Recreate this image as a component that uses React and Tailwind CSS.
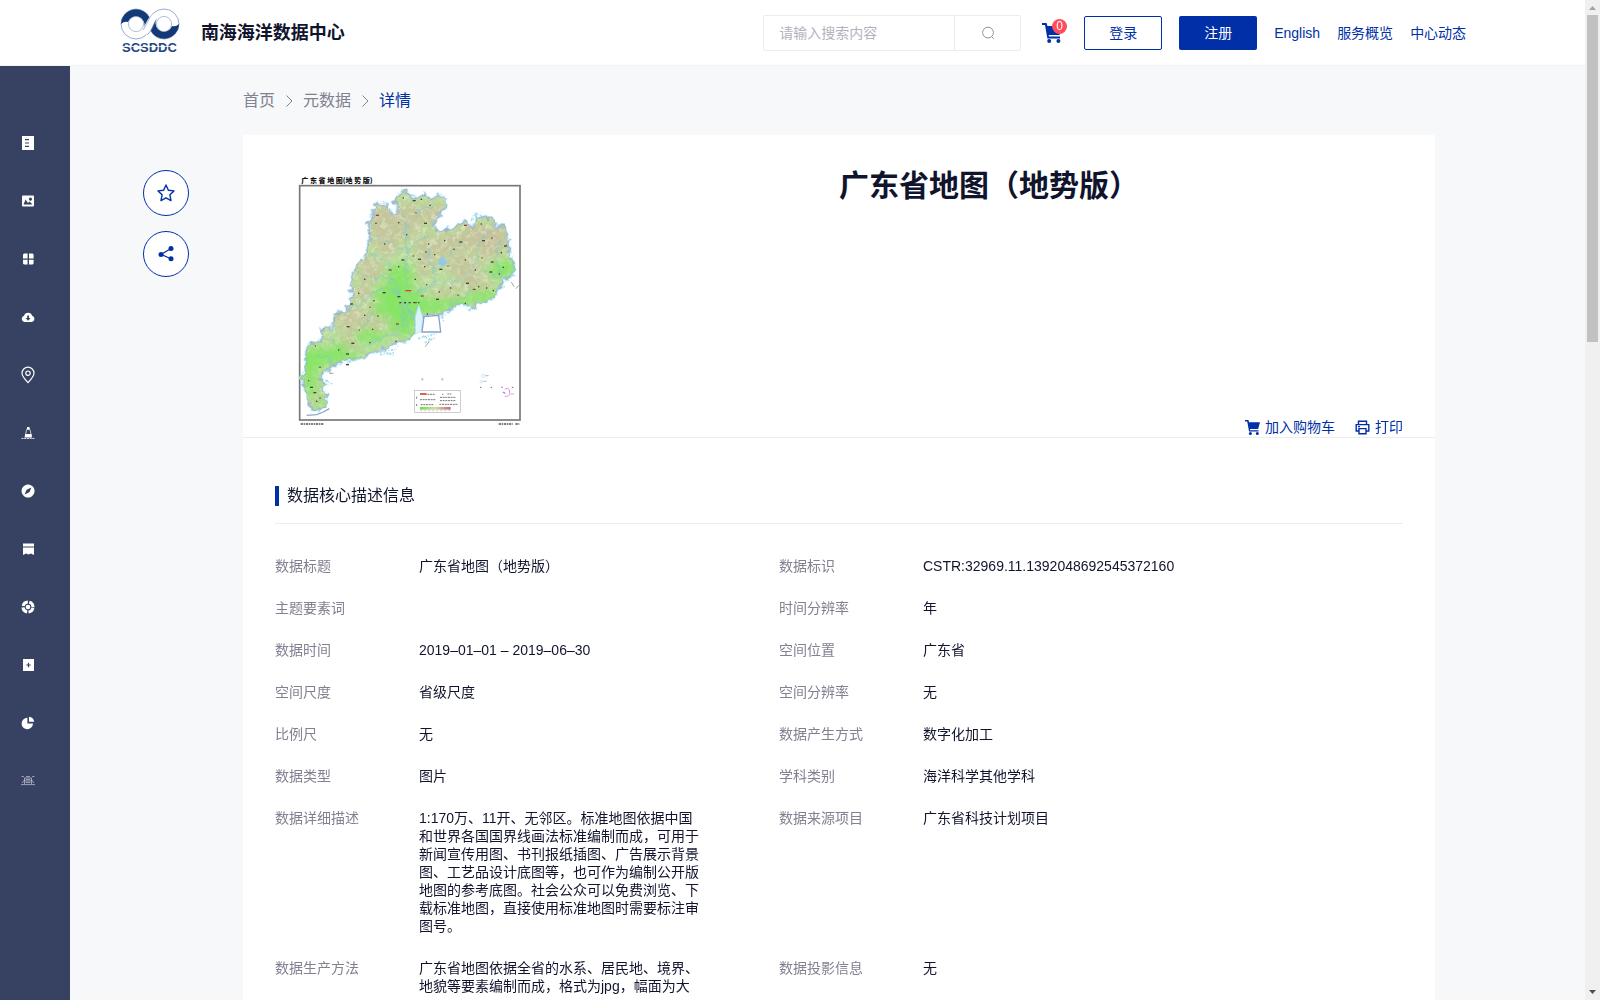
import { useState } from "react";

const province =
  "M48 540 L66 514 L96 516 L98 478 L130 474 L134 432 L160 428 L182 404 L190 300 L212 272 L226 268 L232 222 L244 208 L234 172 L246 150 L256 102 L290 106 L302 134 L320 136 L324 108 L312 94 L330 72 L346 62 L364 84 L384 86 L404 72 L422 88 L450 76 L468 92 L464 118 L438 140 L430 168 L446 188 L482 176 L524 154 L550 180 L556 138 L582 142 L604 146 L616 170 L640 164 L652 200 L656 250 L674 294 L664 314 L640 334 L622 366 L600 388 L562 398 L548 416 L520 400 L494 404 L460 430 L398 438 L386 410 L376 440 L376 486 L350 510 L318 516 L290 532 L246 546 L214 562 L174 570 L130 584 L118 598 L94 612 L86 630 L110 640 L92 652 L108 676 L106 706 L84 720 L64 716 L58 690 L42 660 L38 620 L50 590 Z";

const rivers = [
  "M192 300 Q240 330 280 322 T330 376 L372 440",
  "M134 434 Q190 420 236 378 T330 376",
  "M256 196 Q300 216 350 246 Q380 200 420 200",
  "M326 108 Q350 140 348 178 T352 246 L346 318 L362 380",
  "M380 140 L384 118 L430 112",
  "M512 210 Q490 250 454 270 T440 330 L372 374",
  "M606 180 Q560 210 566 240 T510 332 L440 342 L372 374",
  "M636 200 Q610 260 630 300 L640 328",
  "M574 300 L600 310 L640 328",
  "M98 500 Q150 520 160 560",
  "M220 540 Q260 500 320 490 L346 440",
  "M78 560 Q120 550 130 584",
  "M300 290 L302 340 L330 376",
  "M480 404 Q530 380 550 350",
  "M330 376 L340 470 M340 400 L362 500 M350 390 L376 470",
  "M240 250 Q280 270 300 290 M420 230 Q400 280 440 300 M210 480 Q240 450 250 410",
];

const hills = [
  [270, 150, 40, 50], [350, 150, 50, 55], [430, 130, 40, 34], [290, 220, 40, 40],
  [420, 240, 46, 44], [480, 220, 40, 36], [560, 200, 60, 44], [600, 230, 40, 50],
  [520, 290, 50, 40], [560, 340, 50, 26], [240, 300, 40, 36], [180, 450, 44, 40],
  [180, 520, 26, 24], [250, 450, 36, 34], [470, 370, 50, 18], [220, 370, 30, 30],
  [86, 686, 14, 16], [320, 470, 12, 30], [400, 300, 30, 22], [630, 200, 24, 34],
];

const plains = [
  [330, 320, 44, 40], [350, 400, 60, 50], [290, 370, 40, 26], [340, 460, 40, 40],
  [600, 380, 70, 18], [640, 300, 40, 30], [500, 396, 50, 14], [80, 560, 50, 30],
  [160, 566, 70, 14], [60, 620, 22, 60], [240, 500, 50, 20], [280, 420, 34, 22],
  [430, 410, 40, 24], [96, 700, 14, 20], [150, 540, 30, 20],
];

const towns = [
  [260, 136], [258, 160], [340, 84], [370, 92], [326, 158], [378, 128], [404, 160], [350, 194],
  [284, 222], [336, 270], [370, 258], [408, 246], [386, 268], [404, 290], [326, 290], [298, 300],
  [224, 328], [206, 370], [280, 368], [252, 392], [240, 412], [182, 402], [264, 438], [224, 436],
  [172, 470], [208, 480], [248, 478], [186, 520], [240, 518], [318, 514], [320, 462], [346, 398],
  [378, 398], [324, 380], [376, 328], [410, 344], [440, 388], [482, 354], [448, 366], [450, 298],
  [474, 288], [434, 254], [510, 216], [464, 212], [492, 238], [524, 166], [574, 162], [606, 204],
  [578, 212], [526, 270], [576, 264], [604, 276], [634, 248], [556, 300], [530, 340], [504, 376],
  [566, 350], [600, 306], [628, 312], [640, 292], [550, 358], [526, 400], [412, 432], [170, 552],
  [90, 592], [56, 632], [62, 652], [90, 684], [80, 694], [170, 584], [76, 528], [146, 540],
  [72, 668], [610, 362], [590, 354], [394, 378], [420, 106], [394, 88], [644, 228], [416, 222],
];

function ProvinceMap() {
  return (
    <svg viewBox="0 0 720 780" className="mt-0.5 mb-[7px] h-[260px] w-[240px] shrink-0" role="img" aria-label="广东省地图（地势版）">
      <defs>
        <clipPath id="province">
          <path d={province} />
        </clipPath>
        <filter id="soft" x="-30%" y="-30%" width="160%" height="160%">
          <feGaussianBlur stdDeviation="12" />
        </filter>
        <filter id="coast" x="-5%" y="-5%" width="110%" height="110%">
          <feTurbulence type="fractalNoise" baseFrequency="0.06" numOctaves="2" seed="9" result="noise" />
          <feDisplacementMap in="SourceGraphic" in2="noise" scale="26" xChannelSelector="R" yChannelSelector="G" />
        </filter>
        <filter id="relief" x="0" y="0" width="100%" height="100%">
          <feTurbulence type="fractalNoise" baseFrequency="0.1" numOctaves="3" seed="4" />
          <feColorMatrix values="0 0 0 0 0.66  0 0 0 0 0.5  0 0 0 0 0.4  3 2 0 0 -2.4" />
        </filter>
        <filter id="ridges" x="0" y="0" width="100%" height="100%">
          <feTurbulence type="fractalNoise" baseFrequency="0.08" numOctaves="3" seed="21" />
          <feColorMatrix values="0 0 0 0 0.86  0 0 0 0 0.93  0 0 0 0 0.78  3 2 0 0 -2.4" />
        </filter>
        <linearGradient id="height">
          <stop offset="0" stopColor="#6fe04a" />
          <stop offset="0.5" stopColor="#d8d8a8" />
          <stop offset="1" stopColor="#c56a86" />
        </linearGradient>
      </defs>
      <text x="34" y="38" fontSize="21" fontWeight="900" fill="#111" fontFamily="'Noto Sans CJK SC', sans-serif">
        广 东 省 地 图(地 势 版)
      </text>
      <rect x="29" y="47" width="661" height="703" fill="#fff" stroke="#777" strokeWidth="5" />
      <g filter="url(#coast)">
        <path d={province} fill="none" stroke="#c4ecfa" strokeWidth="12" strokeLinejoin="round" />
        <path d={province} fill="#b6dd98" stroke="#93abd3" strokeWidth="4" strokeLinejoin="round" />
        <g clipPath="url(#province)">
          <g filter="url(#soft)">
            {hills.map(([x, y, rx, ry], i) => (
              <ellipse key={i} cx={x} cy={y} rx={rx} ry={ry} fill="#c9b998" opacity="0.6" />
            ))}
          </g>
          <rect x="30" y="50" width="660" height="690" filter="url(#relief)" opacity="0.35" />
          <rect x="30" y="50" width="660" height="690" filter="url(#ridges)" opacity="0.5" />
          <g filter="url(#soft)">
            {plains.map(([x, y, rx, ry], i) => (
              <ellipse key={i} cx={x} cy={y} rx={rx} ry={ry} fill="#7fe65c" opacity="0.8" />
            ))}
          </g>
          <g fill="none" stroke="#7fc6cb" strokeWidth="2.5">
            {rivers.map((d) => (
              <path key={d} d={d} />
            ))}
          </g>
          <path d="M440 280 L456 262 L470 276 L458 290 Z" fill="#8fc8ee" />
        </g>
      </g>
      {towns.map(([x, y], i) => (
        <rect key={i} x={x - 2} y={y - 2} width={i % 3 ? 4 : 9} height="4" fill={i % 5 ? "#3b4a36" : "#9c4439"} />
      ))}
      <path d="M346 362 h18" stroke="#e0401c" strokeWidth="4" />
      <path d="M328 398 h60" stroke="#3b4a36" strokeWidth="4" strokeDasharray="6 8" />
      {/* pearl river mouth and the islands around it */}
      <path d="M376 440 L386 404 L398 440 L394 484 L376 492 Z" fill="#dcf5fd" stroke="#a9dcef" strokeWidth="2" />
      <path d="M402 440 L446 436 L452 486 L396 486 Z" fill="#fff" stroke="#8ba0cc" strokeWidth="4" />
      <g fill="none" stroke="#9fdde8" strokeWidth="5" strokeDasharray="7 4 3 5">
        <path d="M246 548 L320 538 M270 554 L312 548 M280 544 L310 556 M384 506 L440 490 M404 518 L434 504 M398 498 L424 510 M456 440 L462 456 M470 428 L490 420 M110 600 L126 610 M106 630 L126 642 M650 312 L680 318 M536 418 L546 424 M176 576 L210 566" />
      </g>
      <path d="M406 530 L418 514 M664 336 L672 350 M678 356 L686 346 M118 610 L130 610" stroke="#68777a" strokeWidth="2" />
      <path d="M50 736 L80 734 L100 726 L118 716" fill="none" stroke="#8fa6c2" strokeWidth="4" />
      <path d="M394 628 h6 M454 628 h6" stroke="#9ccaf5" strokeWidth="7" />
      <path d="M570 652 H674" stroke="#888" strokeWidth="4" strokeDasharray="4 28" />
      <circle cx="580" cy="618" r="5" fill="none" stroke="#b2d8f3" strokeWidth="2" />
      <circle cx="574" cy="635" r="4" fill="none" stroke="#b2d8f3" strokeWidth="2" />
      <path d="M586 617 h10 M580 634 h10 M662 672 h10" stroke="#999" strokeWidth="2" />
      <path d="M644 658 Q652 650 658 660 Q662 672 656 677 Q650 682 644 678" fill="none" stroke="#f08ae4" strokeWidth="3" />
      <path d="M638 666 l8 4" stroke="#71a8d8" strokeWidth="4" />
      {/* legend */}
      <rect x="374" y="661" width="137" height="66" fill="#fff" stroke="#b5b5b5" strokeWidth="2" />
      <path d="M390 672 h20" stroke="#d4452a" strokeWidth="5" />
      <path d="M412 673 h24 M390 689 h46 M392 704 h40 M450 682 h46 M450 692 h46 M448 703 h54 M456 673 h4 M472 672 h12 M380 680 v6 M380 702 v6" stroke="#777" strokeWidth="3" strokeDasharray="6 2" />
      <rect x="390" y="711" width="92" height="8" fill="url(#height)" />
      <path d="M392 722 h90" stroke="#777" strokeWidth="2" strokeDasharray="3 9" />
      <path d="M32 762 h70 M626 762 h42 M676 762 h12" stroke="#555" strokeWidth="5" strokeDasharray="7 2 4 2" />
    </svg>
  );
}

function Logo() {
  return (
    <svg viewBox="0 0 62 46" className="mb-1 h-[46px] w-[62px]" aria-hidden="true">
      <g fill="#fff" stroke="#7f96bd" strokeWidth="0.8">
        <circle cx="17" cy="16" r="15" />
        <circle cx="45" cy="16" r="15" />
      </g>
      <path d="M2 16 A15 15 0 0 1 31 11 C28 14 27 18 25 20 A8 8 0 0 0 9 14 Q5 13 2 16 Z" fill="#123a78" />
      <path d="M60 16 A15 15 0 0 1 31 21 C34 18 35 14 37 12 A8 8 0 0 0 53 18 Q57 19 60 16 Z" fill="#123a78" />
      <path d="M25 19 C28 13 30 8 36 4 L38 9 C34 15 34 22 27 27 L23 22 Z" fill="#fff" />
      <path d="M24 22 C29 15 30 8 36 4 M28 27 C34 22 34 15 38 11" fill="none" stroke="#7f96bd" strokeWidth="0.7" />
      <circle cx="17" cy="16" r="7.6" fill="#fff" stroke="#7f96bd" strokeWidth="0.6" />
      <circle cx="45" cy="16" r="7.6" fill="#fff" stroke="#7f96bd" strokeWidth="0.6" />
      <text x="3" y="44" fontSize="13" fontWeight="700" fill="#1f4680" fontFamily="'Liberation Sans', sans-serif">
        SCSDDC
      </text>
      <path d="M3 38.5 h56" stroke="#fff" strokeWidth="0.8" />
    </svg>
  );
}

function CartIcon({ className }) {
  return (
    <svg viewBox="0 0 20 20" className={className} fill="currentColor" aria-hidden="true">
      <path d="M0 0 H4.6 L5.4 3 H20 L17.5 12 H6.6 L7 13.6 H18 V15.4 H5.4 L3 2 H0 Z" />
      <circle cx="7.2" cy="18" r="2" />
      <circle cx="16.4" cy="18" r="2" />
    </svg>
  );
}

const menu = [
  { name: "数据目录", icon: <path fillRule="evenodd" d="M1 0 H13 V14 H1 Z M4 3 V4.2 H8 V3 Z M4 6.4 V7.6 H8 V6.4 Z M4 9.8 V11 H8 V9.8 Z" /> },
  { name: "图集", icon: <path fillRule="evenodd" d="M2 1.5 H12 Q13 1.5 13 2.5 V11.5 Q13 12.5 12 12.5 H2 Q1 12.5 1 11.5 V2.5 Q1 1.5 2 1.5 Z M2.5 10.5 H11.5 L8.6 7.6 L7 9 L4.6 5.6 Z M9.4 3.6 A1.6 1.6 0 1 0 9.5 3.6 Z" /> },
  { name: "专题", icon: <path d="M3 1.6 H6.6 V6.4 H2 V2.6 Z M8 1.6 H11.6 L12.6 2.6 V6.4 H8 Z M2 7.8 H6.6 V12.6 H3 L2 11.6 Z M8 7.8 H12.6 V11.6 L11.6 12.6 H8 Z" /> },
  { name: "下载", icon: <path fillRule="evenodd" d="M3.4 12 A3.2 3.2 0 0 1 3 5.8 A4.3 4.3 0 0 1 11.2 5.8 A3.2 3.2 0 0 1 10.8 12 Z M6.2 5.4 V8 H4.6 L7.1 10.8 L9.6 8 H8 V5.4 Z" /> },
  {
    name: "站位",
    icon: (
      <g fill="none" stroke="currentColor" strokeWidth="1.2">
        <path d="M7 14.6 C3 10.4 1 8 1 5.2 A6 6 0 0 1 13 5.2 C13 8 11 10.4 7 14.6 Z" />
        <circle cx="7" cy="5.2" r="2.2" />
      </g>
    ),
  },
  {
    name: "浮标",
    icon: (
      <g>
        <path d="M6.2 1 H8.4 L9 3.8 H5.6 Z M4.2 8 H10.4 L11 11.4 H3.6 Z" />
        <path d="M5.6 3.6 L4.2 10 M9 3.6 L10.4 10" stroke="currentColor" strokeWidth="0.7" />
        <path d="M0.5 12.4 H13.5" stroke="currentColor" strokeWidth="0.9" strokeDasharray="2 0.7" />
      </g>
    ),
  },
  { name: "导航", icon: <path fillRule="evenodd" d="M7 0.5 A6.5 6.5 0 1 0 7.1 0.5 Z M10.4 3.6 L8.4 8.2 L3.6 10.4 L5.6 5.8 Z" /> },
  { name: "期刊", icon: <path d="M2 1.4 H13 V4.6 H2 Z M2 5.6 H13 V13 L10 11.4 L7.5 12.4 L5 11.4 L2 13 Z" /> },
  {
    name: "服务",
    icon: (
      <g>
        <circle cx="7" cy="7" r="5" fill="none" stroke="currentColor" strokeWidth="3" strokeDasharray="6.4 1.454" strokeDashoffset="-0.7" />
        <circle cx="7" cy="7" r="2.3" />
      </g>
    ),
  },
  { name: "提交", icon: <path fillRule="evenodd" d="M2 1 H13 V13 H2 Z M6.9 4.8 V6.4 H5.3 V7.6 H6.9 V9.2 H8.1 V7.6 H9.7 V6.4 H8.1 V4.8 Z" /> },
  { name: "统计", icon: <path d="M6.4 1.8 V7.6 H12 A5.7 5.7 0 1 1 6.4 1.8 Z M8 0.8 A6 6 0 0 1 13.2 5.8 H8 Z" /> },
  {
    name: "平台",
    icon: (
      <g fill="none" stroke="currentColor" strokeWidth="0.8" opacity="0.65">
        <path d="M0.5 2.6 H3 M5 2.6 H9 M11 2.6 H13.5 M3.5 10 V4 H10.5 V10 M0 10.6 H14 M1 9 L3.5 6 M10.5 6 L13 9 M5 5.6 H9 V8.6 H5 Z M6 7 H8" />
      </g>
    ),
  },
];

const details = [
  ["数据标题", "广东省地图（地势版）", "数据标识", "CSTR:32969.11.1392048692545372160"],
  ["主题要素词", "", "时间分辨率", "年"],
  ["数据时间", "2019–01–01 – 2019–06–30", "空间位置", "广东省"],
  ["空间尺度", "省级尺度", "空间分辨率", "无"],
  ["比例尺", "无", "数据产生方式", "数字化加工"],
  ["数据类型", "图片", "学科类别", "海洋科学其他学科"],
  [
    "数据详细描述",
    "1:170万、11开、无邻区。标准地图依据中国和世界各国国界线画法标准编制而成，可用于新闻宣传用图、书刊报纸插图、广告展示背景图、工艺品设计底图等，也可作为编制公开版地图的参考底图。社会公众可以免费浏览、下载标准地图，直接使用标准地图时需要标注审图号。",
    "数据来源项目",
    "广东省科技计划项目",
  ],
  ["数据生产方法", "广东省地图依据全省的水系、居民地、境界、地貌等要素编制而成，格式为jpg，幅面为大", "数据投影信息", "无"],
];

function Header() {
  const [keyword, setKeyword] = useState("");

  return (
    <header className="h-[66px] shrink-0 border-b border-[#f1f2f4] bg-white">
      <div className="mx-auto flex h-full w-[85%] items-center">
        <a href="#" className="flex items-center gap-5">
          <Logo />
          <span className="text-lg font-bold">南海海洋数据中心</span>
        </a>
        <div className="ml-auto flex items-center gap-[17px] text-[#002fa7]">
          <form className="mr-1 flex h-9 w-[258px] rounded-xs border border-[#ececee]" onSubmit={(e) => e.preventDefault()}>
            <input
              type="text"
              aria-label="搜索"
              placeholder="请输入搜索内容"
              value={keyword}
              onChange={(e) => setKeyword(e.target.value)}
              className="min-w-0 flex-1 px-[15px] text-[#11142d] outline-none placeholder:text-[#b2b3bd]"
            />
            <button type="submit" aria-label="搜索" className="flex w-[66px] items-center justify-center border-l border-[#ececee] text-[#909399]">
              <svg viewBox="0 0 14 14" className="size-3.5" fill="none" stroke="currentColor" aria-hidden="true">
                <circle cx="7" cy="6.6" r="5.4" />
                <path d="M10.6 10.6 L12.8 12.8" />
              </svg>
            </button>
          </form>
          <a href="#" aria-label="购物车" className="relative mr-[5px]">
            <CartIcon className="size-5" />
            <span className="absolute -top-1 left-2.5 size-[15px] rounded-full bg-[#ff4d5b] text-center text-xs leading-[15px] text-white">0</span>
          </a>
          <button className="h-[34px] w-[78px] rounded-xs border border-[#002fa7]">登录</button>
          <button className="h-[34px] w-[78px] rounded-xs bg-[#002fa7] text-white">注册</button>
          <a href="#">English</a>
          <a href="#">服务概览</a>
          <a href="#">中心动态</a>
        </div>
      </div>
    </header>
  );
}

function Sidebar() {
  return (
    <nav className="w-[70px] shrink-0 bg-[#374263] pt-[70px] pl-[21px] text-white">
      <ul className="flex flex-col gap-11">
        {menu.map((item) => (
          <li key={item.name}>
            <a href="#" aria-label={item.name} className="block w-3.5">
              <svg viewBox="0 0 14 14" className="size-3.5 overflow-visible" fill="currentColor" aria-hidden="true">
                {item.icon}
              </svg>
            </a>
          </li>
        ))}
      </ul>
    </nav>
  );
}

function Chevron() {
  return (
    <svg viewBox="0 0 28 14" className="h-3.5 w-7" fill="none" stroke="currentColor" aria-hidden="true">
      <path d="M11.5 1.5 L17 7 L11.5 12.5" />
    </svg>
  );
}

function Scrollbar() {
  return (
    <div className="flex w-[15px] shrink-0 flex-col items-center bg-[#f0f0f0]" aria-hidden="true">
      <svg viewBox="0 0 15 15" className="size-[15px]">
        <path d="M4 10 L7.5 6 L11 10 Z" fill="#a3a3a3" />
      </svg>
      <div className="h-[327px] w-[11px] bg-[#c1c1c1]" />
      <svg viewBox="0 0 15 15" className="mt-auto size-[15px]">
        <path d="M4 5 L7.5 9 L11 5 Z" fill="#505050" />
      </svg>
    </div>
  );
}

export default function App() {
  const [starred, setStarred] = useState(false);

  return (
    <div className="flex h-screen overflow-hidden bg-[#f7f8fa] font-['Liberation_Sans','Noto_Sans_CJK_SC',sans-serif] text-sm text-[#11142d]">
      <div className="flex min-w-0 flex-1 flex-col">
        <Header />
        <div className="flex min-h-0 flex-1">
          <Sidebar />
          <div className="mt-[104px] mr-[54px] ml-[73px] flex flex-col gap-[15px] text-[#002fa7]">
            <button
              aria-label="收藏"
              onClick={() => setStarred(!starred)}
              className="flex size-[46px] items-center justify-center rounded-full border border-current bg-white"
            >
              <svg viewBox="0 0 18 18" className="size-[18px]" fill={starred ? "currentColor" : "none"} stroke="currentColor" strokeWidth="1.4" strokeLinejoin="round" aria-hidden="true">
                <path d="M9 1 L11.4 6.2 L17 6.9 L12.9 10.8 L14 16.6 L9 13.8 L4 16.6 L5.1 10.8 L1 6.9 L6.6 6.2 Z" />
              </svg>
            </button>
            <button aria-label="分享" className="flex size-[46px] items-center justify-center rounded-full border border-current bg-white">
              <svg viewBox="0 0 16 16" className="size-4" fill="currentColor" aria-hidden="true">
                <circle cx="3" cy="8.4" r="2.5" />
                <circle cx="13" cy="2.6" r="2.5" />
                <circle cx="13" cy="12.8" r="2.5" />
                <path d="M13 2.6 L3 8.4 L13 12.8" fill="none" stroke="currentColor" strokeWidth="1.2" />
              </svg>
            </button>
          </div>

          <main className="mr-[150px] flex min-w-0 flex-1 flex-col">
            <nav className="flex items-center pt-[23px] pb-[22px] text-base text-[#808191]">
              <a href="#">首页</a>
              <Chevron />
              <a href="#">元数据</a>
              <Chevron />
              <a href="#" className="text-[#002fa7]">详情</a>
            </nav>

            <div className="flex-1 bg-white">
              <section className="flex gap-[45px] border-b border-[#ebecf0] pt-[33px] pr-8 pl-[47px]">
                <ProvinceMap />
                <div className="flex flex-1 flex-col justify-between">
                  <h1 className="text-center text-3xl font-bold">广东省地图（地势版）</h1>
                  <div className="flex justify-end gap-5 text-[#002fa7]">
                    <button className="flex items-center gap-[5px]">
                      <CartIcon className="size-[15px]" />
                      加入购物车
                    </button>
                    <button className="flex items-center gap-[5px]">
                      <svg viewBox="0 0 15 15" className="size-[15px]" fill="none" stroke="currentColor" strokeWidth="1.4" aria-hidden="true">
                        <path d="M3.5 4.6 V1.2 H11.5 V4.6 M3.5 11 H1.2 V4.6 H13.8 V11 H11.5 M4 8.6 H11 V13.8 H4 Z M3 6.6 H5" />
                      </svg>
                      打印
                    </button>
                  </div>
                </div>
              </section>

              <section className="px-8 pt-12">
                <div className="border-b border-[#ebecf0] pb-[17px]">
                  <h2 className="border-l-4 border-[#002fa7] pl-2 text-base leading-5">数据核心描述信息</h2>
                </div>
                <dl className="mt-[33px] grid grid-cols-[144px_360px_144px_1fr] gap-y-6 leading-[18px]">
                  {details.map(([label, value, label2, value2]) => [
                    <dt key={label} className="text-[#808191]">{label}</dt>,
                    <dd key={label + "-value"} className="pr-20">{value}</dd>,
                    <dt key={label2} className="text-[#808191]">{label2}</dt>,
                    <dd key={label2 + "-value"}>{value2}</dd>,
                  ])}
                </dl>
              </section>
            </div>
          </main>
        </div>
      </div>
      <Scrollbar />
    </div>
  );
}
